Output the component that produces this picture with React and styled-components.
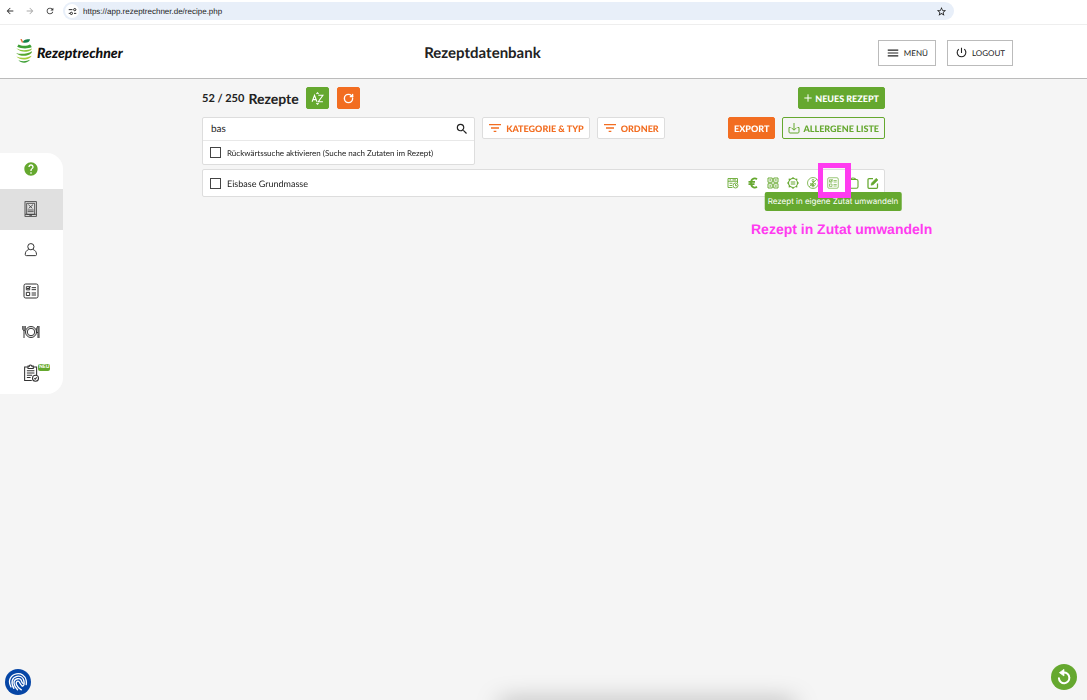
import React, { useState } from 'react';
import styled, { createGlobalStyle, css } from 'styled-components';
import { RotateCw } from 'lucide-react';
import {
    MdArrowBack,
    MdArrowForward,
    MdRefresh,
    MdStarBorder,
    MdSearch,
    MdFilterList,
    MdMenu,
    MdPowerSettingsNew,
    MdHelp,
} from 'react-icons/md';

const GREEN = '#65a82f';
const ORANGE = '#f26d21';
const PINK = '#ff3bf0';

const GlobalStyle = createGlobalStyle`
    * {
        box-sizing: border-box;
    }
    body {
        margin: 0;
        background: #f5f5f5;
        color: #222;
        font-family: Lato, "Liberation Sans", sans-serif;
        font-size: 9px;
        text-rendering: geometricPrecision;
    }
    button, input {
        font-family: inherit;
        text-rendering: inherit;
    }
    button {
        cursor: pointer;
    }
    svg {
        display: block;
        flex-shrink: 0;
    }
`;

const BrowserBar = styled.div`
    display: flex;
    align-items: center;
    height: 25px;
    padding: 0 0 2px;
    background: #fff;
    border-bottom: 1px solid #eee;
`;

const NavButton = styled.button`
    display: flex;
    justify-content: center;
    width: 20px;
    padding: 0;
    border: 0;
    background: none;
    color: ${(props) => (props.$dim ? '#aaa' : '#333')};
`;

const AddressBar = styled.div`
    display: flex;
    align-items: center;
    flex: 0 1 891px;
    height: 18px;
    margin-left: 3px;
    padding: 0 7px 0 2px;
    border-radius: 9px;
    background: #e8eff9;
`;

const SiteInfo = styled.span`
    display: flex;
    align-items: center;
    justify-content: center;
    width: 14px;
    height: 14px;
    border-radius: 50%;
    background: #fff;
`;

const AddressInput = styled.input`
    flex: 1;
    margin-left: 4px;
    padding: 0;
    border: 0;
    outline: 0;
    background: none;
    color: #222;
    font-family: "Liberation Sans", sans-serif;
    font-size: 8px;
`;

const Header = styled.header`
    display: grid;
    grid-template-columns: 41% 1fr auto;
    align-items: center;
    height: 54px;
    padding: 2px 74px 0 15px;
    background: #fff;
    border-bottom: 1px solid #bbb;
`;

const Logo = styled.a`
    display: flex;
    align-items: center;
    gap: 4px;
    color: #111;
    font-size: 14px;
    font-weight: 900;
    font-style: italic;
    text-decoration: none;
`;

const PageTitle = styled.h1`
    margin: 0;
    font-size: 15px;
    font-weight: 700;
`;

const HeaderActions = styled.div`
    display: flex;
    gap: 11px;
`;

const HeaderButton = styled.button`
    display: flex;
    align-items: center;
    gap: 4px;
    height: 26px;
    padding: 0 7px;
    border: 1px solid #bbb;
    background: #fff;
    color: #222;
    font-size: 8px;
`;

const Body = styled.div`
    display: grid;
    grid-template-columns: 63px 1fr 63px;
    align-items: start;
`;

const Sidebar = styled.nav`
    display: flex;
    flex-direction: column;
    margin-top: 74px;
    overflow: hidden;
    border-radius: 0 16px 16px 0;
    background: #fff;
`;

const SidebarLink = styled.a`
    position: relative;
    display: flex;
    align-items: center;
    justify-content: center;
    height: ${(props) => (props.$short ? '36px' : '41px')};
    padding: ${(props) => (props.$short ? '0 2px 4px 0' : '0 1px 2px 0')};
    background: ${(props) => (props.$active ? '#e0e0e0' : 'none')};
    color: ${(props) => (props.$green ? GREEN : '#333')};
`;

const NewBadge = styled.span`
    position: absolute;
    top: 11px;
    left: 38px;
    padding: 0 1px;
    border-radius: 2px;
    background: ${GREEN};
    color: #fff;
    font-size: 5px;
    font-weight: 900;
    line-height: 7px;
`;

const Content = styled.main`
    width: 100%;
    max-width: 683px;
    margin: 0 auto;
    padding-top: 8px;
`;

const Toolbar = styled.div`
    display: flex;
    align-items: center;
    height: 22px;
`;

const Count = styled.span`
    font-size: 11px;
    font-weight: 700;
`;

const ToolbarTitle = styled.h2`
    margin: 0 7px 0 4px;
    font-size: 14px;
    font-weight: 700;
`;

const Button = styled.button`
    display: flex;
    align-items: center;
    justify-content: center;
    gap: 3px;
    height: 22px;
    padding: 0 5px;
    border: 1px solid ${GREEN};
    border-radius: 2px;
    background: ${GREEN};
    color: #fff;
    font-size: 9px;
    font-weight: 900;
    white-space: nowrap;

    ${(props) => props.$orange && css`
        border-color: ${ORANGE};
        background: ${ORANGE};
    `}
    ${(props) => props.$outline && css`
        background: none;
        color: ${GREEN};
    `}
    ${(props) => props.$filter && css`
        padding-left: 4px;
        border-color: #ddd;
        background: #fff;
        color: ${ORANGE};
    `}
    ${(props) => props.$square && css`
        width: 23px;
        padding: 0;
    `}
`;

const ToolbarGroup = styled.div`
    display: flex;
    gap: 8px;
`;

const PushRight = styled.div`
    display: flex;
    gap: 7px;
    margin-left: auto;
`;

const FilterRow = styled.div`
    display: flex;
    align-items: flex-start;
    gap: 7px;
    margin-top: 8px;
`;

const SearchBox = styled.div`
    width: 40%;
    border: 1px solid #ddd;
    border-radius: 2px;
    background: #fff;
`;

const SearchLine = styled.div`
    display: flex;
    align-items: center;
    height: 23px;
    padding: 0 5px 0 8px;
    border-bottom: 1px solid #e8e8e8;
`;

const SearchInput = styled.input`
    flex: 1;
    min-width: 0;
    padding: 0;
    border: 0;
    outline: 0;
    color: #222;
    font-size: 10px;
`;

const SearchButton = styled.button`
    padding: 0;
    border: 0;
    background: none;
    color: #222;
`;

const CheckLabel = styled.label`
    display: flex;
    align-items: center;
    gap: 6px;
    padding-left: 7px;
    font-size: ${(props) => (props.$small ? '8px' : '9px')};
    height: ${(props) => (props.$small ? '23px' : '26px')};
`;

const Checkbox = styled.input`
    appearance: none;
    width: 11px;
    height: 11px;
    margin: 0;
    border: 1px solid #444;
    background: #fff;

    &:checked {
        background: ${GREEN};
    }
`;

const RecipeRow = styled.div`
    display: flex;
    align-items: center;
    justify-content: space-between;
    margin-top: 4px;
    padding-right: 5px;
    border: 1px solid #ddd;
    border-radius: 2px;
    background: #fff;
`;

const RecipeActions = styled.div`
    display: flex;
    gap: 8px;
`;

const IconButton = styled.button`
    position: relative;
    width: 12px;
    height: 12px;
    padding: 0;
    border: 0;
    background: none;
    color: ${GREEN};
`;

const Tooltip = styled.span`
    position: absolute;
    top: 15px;
    left: 50%;
    z-index: 1;
    padding: 0 3px;
    border-radius: 2px;
    background: ${GREEN};
    color: #fff;
    font-family: Inter, "Liberation Sans", sans-serif;
    font-size: 8px;
    line-height: 19px;
    white-space: nowrap;
    transform: translateX(-50%);
`;

const Highlight = styled.span`
    position: absolute;
    top: -14px;
    left: -9px;
    z-index: 2;
    width: 33px;
    height: 35px;
    border: 6px solid ${PINK};
    border-width: 5px 6px 6px 5px;
`;

const Note = styled.span`
    position: absolute;
    top: 43px;
    left: -76px;
    color: ${PINK};
    font-family: "Liberation Sans", sans-serif;
    font-size: 14px;
    font-weight: 700;
    line-height: 18px;
    white-space: nowrap;
`;

const RoundButton = styled.button`
    position: fixed;
    bottom: ${(props) => (props.$left ? '5px' : '10px')};
    ${(props) => (props.$left ? 'left: 5px;' : 'right: 10px;')}
    display: flex;
    align-items: center;
    justify-content: center;
    width: 26px;
    height: 26px;
    padding: 0;
    border: 0;
    border-radius: 50%;
    background: ${(props) => (props.$left ? '#0646a6' : GREEN)};
    color: #fff;
`;

const DockShadow = styled.div`
    position: fixed;
    bottom: -14px;
    left: 46%;
    right: 27%;
    height: 12px;
    box-shadow: 0 0 24px rgba(0, 0, 0, 0.35);
`;

const Svg = ({ size = 12, box = 24, width = 1.5, children }) => (
    <svg
        width={size}
        height={size}
        viewBox={`0 0 ${box} ${box}`}
        fill="none"
        stroke="currentColor"
        strokeWidth={width}
        aria-hidden="true"
    >
        {children}
    </svg>
);

const LogoMark = () => (
    <svg width="18" height="28" viewBox="0 0 18 28" fill="none" aria-hidden="true">
        <path d="M8 3.600C7.600 1.600 10 0 15 .2 14.800 2.900 12 4.400 8 3.600Z" fill="#16804a" />
        <path d="M6 0 7.600 3.500" stroke="#e0703c" strokeWidth="1.400" />
        <path d="M3.500 5.500c3 1.600 8.500 1.800 11.500 0 1 .8 1.500 1.800 1.600 2.800-4 1.600-10.500 1.500-14.400-.5Z" fill="#3d9f35" />
        <path d="M1.200 9.300c5 2.600 11 2.200 15.800.2-.8 3.600-10.500 5.200-15.800-.2Z" fill="#8cc63a" />
        <path d="M1 14c5 1.600 11 1 16-1.800.2 4.300-10.500 6.900-16 1.800Z" fill="#55a62f" />
        <path d="M1.400 17.500c5 2 10.600 1.400 15.200-.8-1.400 4.300-11.600 5.300-15.200.8Z" fill="#a5cd39" />
        <path d="M3.400 21.200c4 1.400 8 1.200 11.600-.4-2 3.600-9 3.800-11.600.4Z" fill="#3d9f35" />
    </svg>
);

const TuneIcon = () => (
    <Svg size={9} width={2.6}>
        <path d="M2 7h10M16 17h6M2 17h3" />
        <circle cx="18" cy="7" r="3" />
        <circle cx="9" cy="17" r="3" />
    </Svg>
);

const RecipeIcon = () => (
    <Svg size={16} width={1.2}>
        <rect x="3" y="1" width="17" height="22" />
        <path d="M5.500 3.500h12V20h-12zM3 20h17M8 5.500l6 5.500M15 5.500 8.500 11M7 13.500h9M7 16h9" />
        <path d="M9.500 21.500h4" />
    </Svg>
);

const PersonIcon = () => (
    <Svg size={15} width={1.6}>
        <circle cx="11" cy="7.500" r="5" />
        <path d="M7.500 12C4 13.200 2 16 2 20c0 1.200.600 1.800 1.800 1.800h14.400c1.200 0 1.800-.600 1.800-1.800 0-4-2-6.800-5.500-8" />
    </Svg>
);

const IngredientIcon = ({ size = 12, width = 1.5 }) => (
    <Svg size={size} width={width}>
        <rect x="1.500" y="1.500" width="21" height="21" rx="2.500" />
        <path d="M5 5.500h5v4.800H5zM6 7.500l1.600 1.500L11.500 4.500M5 14h5v4.800H5zM13 7h6.500M13 10h6.500M13 15h6.500M13 18h6.500" />
    </Svg>
);

const PlateIcon = () => (
    <svg width="18" height="14" viewBox="0 0 36 28" fill="none" stroke="currentColor" strokeWidth="2" aria-hidden="true">
        <circle cx="18" cy="14" r="11" />
        <circle cx="18" cy="14" r="7.500" />
        <path d="M1.500 2v6c0 2 1 3 2.500 3s2.500-1 2.500-3V2M4 2v24M32 26V2c-2 2-3 5-3 9v4h3M34 2v24" />
    </svg>
);

const ClipboardIcon = () => (
    <Svg size={18} width={1.4}>
        <path d="M8 4H3.500v18H13M15 4h4.500v11M8 2.800h2c0-2 3-2 3 0h2V6H8zM6.500 9h10M6.500 12h10M6.500 15h7M6.500 18h5" />
        <circle cx="18" cy="19" r="4" />
        <path d="m16.300 19 1.200 1.200 2.200-2.400" />
    </Svg>
);

const CostIcon = () => (
    <Svg width={1.800}>
        <path d="M11 21H2V3h19v9M2 8.500h19M5 12.500h6M5 17h5M5 5.800h3M11 5.800h7" />
        <circle cx="17" cy="17" r="5" />
        <path d="M17 14v3.500h3" />
    </Svg>
);

const EuroIcon = () => (
    <Svg width={3.400}>
        <path d="M20 4.500C17.500 2.500 8 .5 8 12s9.500 9.500 12 7.500M3 9.800h13M3 14.400h12" />
    </Svg>
);

const QrIcon = () => (
    <Svg width={1.900}>
        <path d="M2 2h8.500v8.500H2zM13.500 2H22v8.500h-8.500zM2 13.500h8.500V22H2zM13.500 13.500H22V22h-8.500z" />
        <path d="M5 6.200h2.600M16.500 6.200h2.600M5 17.800h2.600M16.500 17.800h2.600" strokeWidth="3" />
    </Svg>
);

const BadgeIcon = () => (
    <Svg width={2.200}>
        <circle cx="12" cy="12" r="9" />
        <path d="M12 0v3M12 21v3M0 12h3M21 12h3M3.500 3.500l2.400 2.400M18.100 18.100l2.400 2.400M3.500 20.500l2.400-2.400M18.100 5.900l2.400-2.400M7.500 10h9M7.500 14h9" />
    </Svg>
);

const AllergenIcon = () => (
    <Svg width={1.500}>
        <circle cx="12" cy="12" r="11" />
        <path d="M4.500 19.500 19.500 4.500M12 21V8M12 18c-4 0-5-2-5-5 4 0 5 2 5 5ZM12 18c4 0 5-2 5-5-4 0-5 2-5 5ZM12 10c-2.500-2-2.500-4 0-6 2.500 2 2.500 4 0 6Z" />
    </Svg>
);

const BagIcon = () => (
    <Svg width={2.200}>
        <rect x="2" y="5" width="20" height="17.500" rx="3" />
        <path d="M7 5c0-4 10-4 10 0" />
    </Svg>
);

const EditIcon = () => (
    <Svg width={2.500}>
        <path d="M12 3H4c-1.500 0-2 .5-2 2v15.500c0 1.500.5 2 2 2h15c1.500 0 2-.5 2-2V13" />
        <path d="m9 12 9.500-9.500 3.500 3.500L12.500 15.500 8 16.500z" fill="currentColor" strokeWidth="1" />
    </Svg>
);

const DownloadIcon = () => (
    <Svg size={12} width={2}>
        <path d="M5 11H2v9c0 1.200.8 2 2 2h16c1.200 0 2-.8 2-2v-9h-3M12 2v14M7 11.500l5 5 5-5" />
    </Svg>
);

const SortIcon = () => (
    <Svg size={13} width={2}>
        <path d="m2 18 4.500-12L11 18M3.500 14h6M13.500 6H22l-8.500 12H22M10 3.500l2-2 2 2M10 20.500l2 2 2-2" />
    </Svg>
);

const PrintIcon = () => (
    <Svg size={20} width={1.600}>
        <g strokeLinecap="round" transform="rotate(-12 12 12)">
            <path d="M2.500 16C0 8 5 2 12 2c6 0 10 4.500 10 10 0 2-.4 3.500-1 5" />
            <path d="M5.500 18.500C3 11 6 5 12 5c4.500 0 7.200 3.200 7.200 7 0 4.500-1.500 6.500-3.200 6" />
            <path d="M9.500 21C5.500 15 6 8 12 8c3 0 4.500 2 4.500 4.500 0 1 .4 2 1.200 2.500" />
            <path d="M14 22c-5-4-6-11-2-11 2.500 0 1 4 4 6.500" />
        </g>
    </Svg>
);

const UndoIcon = () => (
    <Svg size={16} width={3}>
        <path d="M10 5.500c6-1 10 3 10 7.500a7.800 7.800 0 0 1-15.600 1" strokeLinecap="round" />
        <path d="M12 .5v10L5 5.500z" fill="currentColor" strokeWidth="1" />
    </Svg>
);

const sidebarItems = [
    { label: 'Hilfe', icon: <MdHelp size={16} />, short: true, green: true },
    { label: 'Rezepte', icon: <RecipeIcon />, active: true },
    { label: 'Profil', icon: <PersonIcon /> },
    { label: 'Zutaten', icon: <IngredientIcon size={16} /> },
    { label: 'Speiseplan', icon: <PlateIcon /> },
    { label: 'Aufgaben', icon: <ClipboardIcon />, badge: 'NEU' },
];

const recipeActions = [
    { label: 'Kalkulation', icon: <CostIcon /> },
    { label: 'Preis', icon: <EuroIcon /> },
    { label: 'QR-Code', icon: <QrIcon /> },
    { label: 'Etikett', icon: <BadgeIcon /> },
    { label: 'Allergene', icon: <AllergenIcon /> },
    { label: 'Rezept in eigene Zutat umwandeln', icon: <IngredientIcon width={1.300} />, hint: true },
    { label: 'Kopieren', icon: <BagIcon /> },
    { label: 'Bearbeiten', icon: <EditIcon /> },
];

function App() {
    const [search, setSearch] = useState('bas');
    const [url, setUrl] = useState('https://app.rezeptrechner.de/recipe.php');

    return (
        <>
            <GlobalStyle />
            <BrowserBar>
                <NavButton type="button" aria-label="Zurück"><MdArrowBack size={10} /></NavButton>
                <NavButton type="button" aria-label="Vor" $dim><MdArrowForward size={10} /></NavButton>
                <NavButton type="button" aria-label="Neu laden"><MdRefresh size={10} /></NavButton>
                <AddressBar>
                    <SiteInfo><TuneIcon /></SiteInfo>
                    <AddressInput aria-label="Adresse" value={url} onChange={(e) => setUrl(e.target.value)} />
                    <MdStarBorder size={11} />
                </AddressBar>
            </BrowserBar>

            <Header>
                <Logo href="#"><LogoMark />Rezeptrechner</Logo>
                <PageTitle>Rezeptdatenbank</PageTitle>
                <HeaderActions>
                    <HeaderButton type="button"><MdMenu size={14} />MENÜ</HeaderButton>
                    <HeaderButton type="button"><MdPowerSettingsNew size={13} />LOGOUT</HeaderButton>
                </HeaderActions>
            </Header>

            <Body>
                <Sidebar>
                    {sidebarItems.map((item) => (
                        <SidebarLink
                            key={item.label}
                            href="#"
                            aria-label={item.label}
                            $short={item.short}
                            $active={item.active}
                            $green={item.green}
                        >
                            {item.icon}
                            {item.badge && <NewBadge>{item.badge}</NewBadge>}
                        </SidebarLink>
                    ))}
                </Sidebar>

                <Content>
                    <Toolbar>
                        <Count>52 / 250</Count>
                        <ToolbarTitle>Rezepte</ToolbarTitle>
                        <ToolbarGroup>
                            <Button type="button" $square aria-label="Sortieren"><SortIcon /></Button>
                            <Button type="button" $square $orange aria-label="Zurücksetzen">
                                <RotateCw size={11} strokeWidth={3} />
                            </Button>
                        </ToolbarGroup>
                        <PushRight>
                            <Button type="button">
                                <Svg size={8} width={3}><path d="M12 1v22M1 12h22" /></Svg>
                                NEUES REZEPT
                            </Button>
                        </PushRight>
                    </Toolbar>

                    <FilterRow>
                        <SearchBox>
                            <SearchLine>
                                <SearchInput
                                    aria-label="Suche"
                                    value={search}
                                    onChange={(e) => setSearch(e.target.value)}
                                    autoFocus
                                />
                                <SearchButton type="button" aria-label="Suchen"><MdSearch size={14} /></SearchButton>
                            </SearchLine>
                            <CheckLabel $small>
                                <Checkbox type="checkbox" />
                                Rückwärtssuche aktivieren (Suche nach Zutaten im Rezept)
                            </CheckLabel>
                        </SearchBox>
                        <Button type="button" $filter><MdFilterList size={16} />KATEGORIE &amp; TYP</Button>
                        <Button type="button" $filter><MdFilterList size={16} />ORDNER</Button>
                        <PushRight>
                            <Button type="button" $orange>EXPORT</Button>
                            <Button type="button" $outline><DownloadIcon />ALLERGENE LISTE</Button>
                        </PushRight>
                    </FilterRow>

                    <RecipeRow>
                        <CheckLabel>
                            <Checkbox type="checkbox" />
                            Eisbase Grundmasse
                        </CheckLabel>
                        <RecipeActions>
                            {recipeActions.map((action) => (
                                <IconButton key={action.label} type="button" aria-label={action.label}>
                                    {action.icon}
                                    {action.hint && (
                                        <>
                                            <Tooltip>{action.label}</Tooltip>
                                            <Highlight />
                                            <Note>Rezept in Zutat umwandeln</Note>
                                        </>
                                    )}
                                </IconButton>
                            ))}
                        </RecipeActions>
                    </RecipeRow>
                </Content>
            </Body>

            <RoundButton type="button" $left aria-label="Datenschutz"><PrintIcon /></RoundButton>
            <RoundButton type="button" aria-label="Rückgängig"><UndoIcon /></RoundButton>
            <DockShadow />
        </>
    );
}

export default App;
